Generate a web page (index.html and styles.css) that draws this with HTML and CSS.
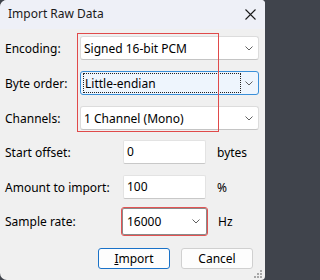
FILE: index.html
```html
<!DOCTYPE html>
<html>
<head>
<meta charset="utf-8">
<link rel="stylesheet" href="styles.css">
</head>
<body>
<div class="window">
  <div class="titlebar">
    <span class="title">Import Raw Data</span>
    <svg class="close" width="11" height="11" viewBox="0 0 11 11"><path d="M0.5 0.5 L10.5 10.5 M10.5 0.5 L0.5 10.5" stroke="#1b1b1b" stroke-width="1.1" fill="none"/></svg>
  </div>
  <div class="content">
    <div class="row wide">
      <span class="label">Encoding:</span>
      <div class="combo"><span class="val">Signed 16-bit PCM</span><svg class="chev" width="8" height="5" viewBox="0 0 8 5"><path d="M0.5 0.5 L4 4 L7.5 0.5" stroke="#606060" fill="none"/></svg></div>
    </div>
    <div class="row wide">
      <span class="label">Byte order:</span>
      <div class="combo focused"><span class="val focusrect">Little-endian</span><svg class="chev" width="8" height="5" viewBox="0 0 8 5"><path d="M0.5 0.5 L4 4 L7.5 0.5" stroke="#606060" fill="none"/></svg></div>
    </div>
    <div class="row wide">
      <span class="label">Channels:</span>
      <div class="combo"><span class="val">1 Channel (Mono)</span><svg class="chev" width="8" height="5" viewBox="0 0 8 5"><path d="M0.5 0.5 L4 4 L7.5 0.5" stroke="#606060" fill="none"/></svg></div>
    </div>
    <div class="row narrow first">
      <span class="label">Start offset:</span>
      <div class="field">0</div>
      <span class="unit">bytes</span>
    </div>
    <div class="row narrow">
      <span class="label">Amount to import:</span>
      <div class="field">100</div>
      <span class="unit">%</span>
    </div>
    <div class="row narrow rate">
      <span class="label">Sample rate:</span>
      <div class="combo small marked"><span class="val">16000</span><svg class="chev" width="8" height="5" viewBox="0 0 8 5"><path d="M0.5 0.5 L4 4 L7.5 0.5" stroke="#606060" fill="none"/></svg></div>
      <span class="unit">Hz</span>
    </div>
    <div class="buttons">
      <div class="btn default"><span class="ul">I</span>mport</div>
      <div class="btn">Cancel</div>
    </div>
  </div>
  <div class="annot"></div>
  <svg class="grip" width="8" height="8" viewBox="0 0 8 8">
    <rect x="6" y="0" width="2" height="2" fill="#a8a8a8"/>
    <rect x="3" y="3" width="2" height="2" fill="#a8a8a8"/>
    <rect x="6" y="3" width="2" height="2" fill="#a8a8a8"/>
    <rect x="0" y="6" width="2" height="2" fill="#a8a8a8"/>
    <rect x="3" y="6" width="2" height="2" fill="#a8a8a8"/>
    <rect x="6" y="6" width="2" height="2" fill="#a8a8a8"/>
  </svg>
</div>
</body>
</html>
```

FILE: styles.css
```css
html, body {
  margin: 0;
  padding: 0;
  background: #40444c;
  width: 265px;
  height: 280px;
  overflow: hidden;
}

.window {
  position: relative;
  width: 265px;
  height: 280px;
  box-sizing: border-box;
  background: #f0f0f0;
  border-radius: 7px 4px 4px 7px;
  overflow: hidden;
  font-family: "Segoe UI", "Noto Sans", sans-serif;
  font-size: 12px;
  color: #000;
}

.titlebar {
  height: 29px;
  background: #eef0f7;
  display: flex;
  align-items: center;
  justify-content: space-between;
  padding: 0 9px 0 8px;
}

.title {
  color: #1a1a1a;
  margin-top: -2px;
}

.close {
  margin-top: -1px;
}

.content {
  padding: 7px 6px 0 5px;
}

.row {
  display: flex;
  align-items: center;
  height: 24px;
  margin-bottom: 11px;
}

.row.wide .label {
  width: 75px;
  flex: none;
}

.row.narrow .label {
  width: 117px;
  flex: none;
}

.row.first {
  margin-top: -1px;
}

.row.narrow {
  margin-bottom: 11px;
}

.row.rate {
  height: 27px;
  margin-top: -2px;
  margin-bottom: 13px;
}

.combo {
  flex: none;
  width: 179px;
  height: 24px;
  box-sizing: border-box;
  background: #fff;
  border: 1px solid #dcdcdc;
  border-bottom-color: #c4c4c4;
  border-radius: 3px;
  display: flex;
  align-items: center;
  justify-content: space-between;
  padding: 0 5px 0 3px;
}

.combo.focused {
  border: 1px solid #3a8fd8;
  background: #eef5fd;
  border-radius: 3px;
  padding: 0 5px 0 2px;
}

.focusrect {
  border: 1px dotted #222;
  height: 20px;
  line-height: 19px;
  width: 158px;
  box-sizing: border-box;
  padding-left: 1px;
}

.combo.small {
  width: 85px;
  height: 27px;
  border: 1px solid #8a8a8a;
  border-radius: 2px;
  padding: 0 6px 0 4px;
}

.combo.marked {
  outline: 1px solid #e25353;
  outline-offset: 0;
}

.field {
  flex: none;
  width: 83px;
  height: 24px;
  box-sizing: border-box;
  background: #fff;
  border: 1px solid #e3e3e3;
  border-bottom: 1px solid #c8c8c8;
  border-radius: 2px;
  margin-left: 1px;
  padding-left: 3px;
  line-height: 22px;
}

.unit {
  margin-left: 11px;
}

.buttons {
  display: flex;
  justify-content: flex-end;
  gap: 11px;
  padding-right: 6px;
}

.btn {
  width: 72px;
  height: 21px;
  box-sizing: border-box;
  border: 1px solid #d0d0d0;
  border-radius: 3px;
  background: #fdfdfd;
  text-align: center;
  line-height: 19px;
}

.btn.default {
  border-color: #1a72c8;
  width: 72px;
}

.ul {
  text-decoration: underline;
}

.annot {
  position: absolute;
  left: 77px;
  top: 33px;
  width: 142px;
  height: 99px;
  box-sizing: border-box;
  border: 1px solid #e04a4a;
  pointer-events: none;
}

.grip {
  position: absolute;
  right: 3px;
  bottom: 2px;
}
```
